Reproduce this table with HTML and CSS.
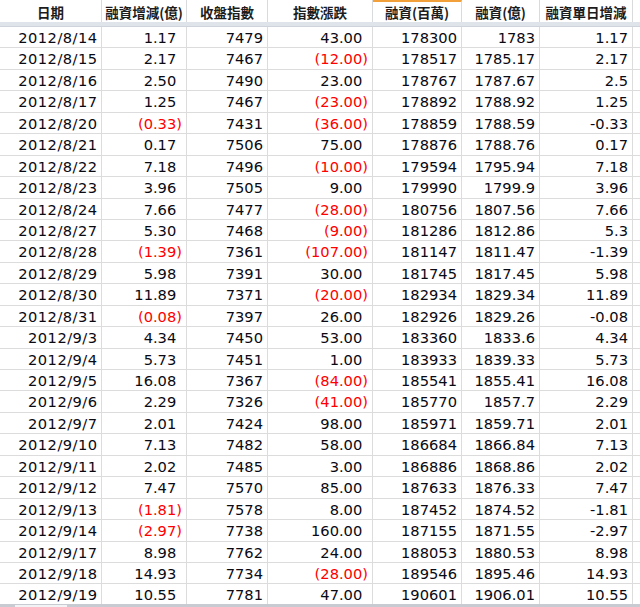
FILE: index.html
```html
<!DOCTYPE html>
<html lang="zh-Hant">
<head>
<meta charset="utf-8">
<title>融資</title>
<link rel="stylesheet" href="styles.css">
</head>
<body>
<div class="sheet" id="sheet">
  <div class="hd">日期</div>
  <div class="hd">融資增減(億)</div>
  <div class="hd">收盤指數</div>
  <div class="hd">指數漲跌</div>
  <div class="hd sel">融資(百萬)</div>
  <div class="hd">融資(億)</div>
  <div class="hd">融資單日增減</div>
  <div class="hd blank"></div>
  <div class="band"></div>
</div>
<div class="scroll"><span class="thumb"></span></div>
<script>
var rows = [
["2012/8/14","1.17","7479","43.00","178300","1783","1.17"],
["2012/8/15","2.17","7467","-12.00","178517","1785.17","2.17"],
["2012/8/16","2.50","7490","23.00","178767","1787.67","2.5"],
["2012/8/17","1.25","7467","-23.00","178892","1788.92","1.25"],
["2012/8/20","-0.33","7431","-36.00","178859","1788.59","-0.33"],
["2012/8/21","0.17","7506","75.00","178876","1788.76","0.17"],
["2012/8/22","7.18","7496","-10.00","179594","1795.94","7.18"],
["2012/8/23","3.96","7505","9.00","179990","1799.9","3.96"],
["2012/8/24","7.66","7477","-28.00","180756","1807.56","7.66"],
["2012/8/27","5.30","7468","-9.00","181286","1812.86","5.3"],
["2012/8/28","-1.39","7361","-107.00","181147","1811.47","-1.39"],
["2012/8/29","5.98","7391","30.00","181745","1817.45","5.98"],
["2012/8/30","11.89","7371","-20.00","182934","1829.34","11.89"],
["2012/8/31","-0.08","7397","26.00","182926","1829.26","-0.08"],
["2012/9/3","4.34","7450","53.00","183360","1833.6","4.34"],
["2012/9/4","5.73","7451","1.00","183933","1839.33","5.73"],
["2012/9/5","16.08","7367","-84.00","185541","1855.41","16.08"],
["2012/9/6","2.29","7326","-41.00","185770","1857.7","2.29"],
["2012/9/7","2.01","7424","98.00","185971","1859.71","2.01"],
["2012/9/10","7.13","7482","58.00","186684","1866.84","7.13"],
["2012/9/11","2.02","7485","3.00","186886","1868.86","2.02"],
["2012/9/12","7.47","7570","85.00","187633","1876.33","7.47"],
["2012/9/13","-1.81","7578","8.00","187452","1874.52","-1.81"],
["2012/9/14","-2.97","7738","160.00","187155","1871.55","-2.97"],
["2012/9/17","8.98","7762","24.00","188053","1880.53","8.98"],
["2012/9/18","14.93","7734","-28.00","189546","1895.46","14.93"],
["2012/9/19","10.55","7781","47.00","190601","1906.01","10.55"]
];
var sheet = document.getElementById("sheet");
function cell(html, cls) {
  var d = document.createElement("div");
  d.className = "c" + (cls ? " " + cls : "");
  d.innerHTML = html;
  sheet.appendChild(d);
}
function acct(v) {
  if (v.charAt(0) === "-") {
    return '<span class="neg">(' + v.slice(1) + ')</span>';
  }
  return v + '<span class="pad">)</span>';
}
rows.forEach(function (r) {
  cell(r[0], "date");
  cell(acct(r[1]));
  cell(r[2]);
  cell(acct(r[3]));
  cell(r[4]);
  cell(r[5]);
  cell(r[6]);
  cell("", "blank");
});
</script>
</body>
</html>
```

FILE: styles.css
```css
html, body {
  margin: 0;
  padding: 0;
  background: #ffffff;
  overflow: hidden;
}

.sheet {
  display: grid;
  grid-template-columns: 102px 85px 81px 105px 89px 78px 93px 1fr;
  grid-template-rows: 22px 5px;
  grid-auto-rows: 21.44px;
  width: 640px;
}

.hd {
  box-sizing: border-box;
  border-right: 1px solid #d9dadb;
  font-family: "Noto Sans CJK TC", "Noto Sans CJK SC", sans-serif;
  font-weight: 700;
  font-size: 13.5px;
  color: #1c1c1c;
  display: flex;
  align-items: center;
  justify-content: center;
  padding-top: 1px;
  background: #fff;
}

.hd.sel {
  border-top: 2px solid #f2a13a;
  padding-top: 0;
}

.band {
  grid-column: 1 / -1;
  background: #dfe3ea;
  border-bottom: 1px solid #cfd4dc;
}

.c {
  box-sizing: border-box;
  border-right: 1px solid #dcdcdc;
  border-bottom: 1px solid #dcdcdc;
  font-family: "DejaVu Sans", Verdana, sans-serif;
  font-size: 14.67px;
  color: #0a0a14;
  text-align: right;
  padding: 2px 4px 0 0;
  white-space: nowrap;
  line-height: 18px;
}

.c.date {
  letter-spacing: 0.45px;
  padding-right: 3.5px;
}

.blank {
  border-right: none;
}

.neg {
  color: #ff0000;
}

.pad {
  visibility: hidden;
}

.scroll {
  position: fixed;
  left: 0;
  right: 0;
  bottom: 0;
  height: 3px;
  background: #c8ccd2;
}

.thumb {
  position: absolute;
  left: 15px;
  top: 1px;
  width: 52px;
  height: 2px;
  background: #f2f3f5;
}
```
